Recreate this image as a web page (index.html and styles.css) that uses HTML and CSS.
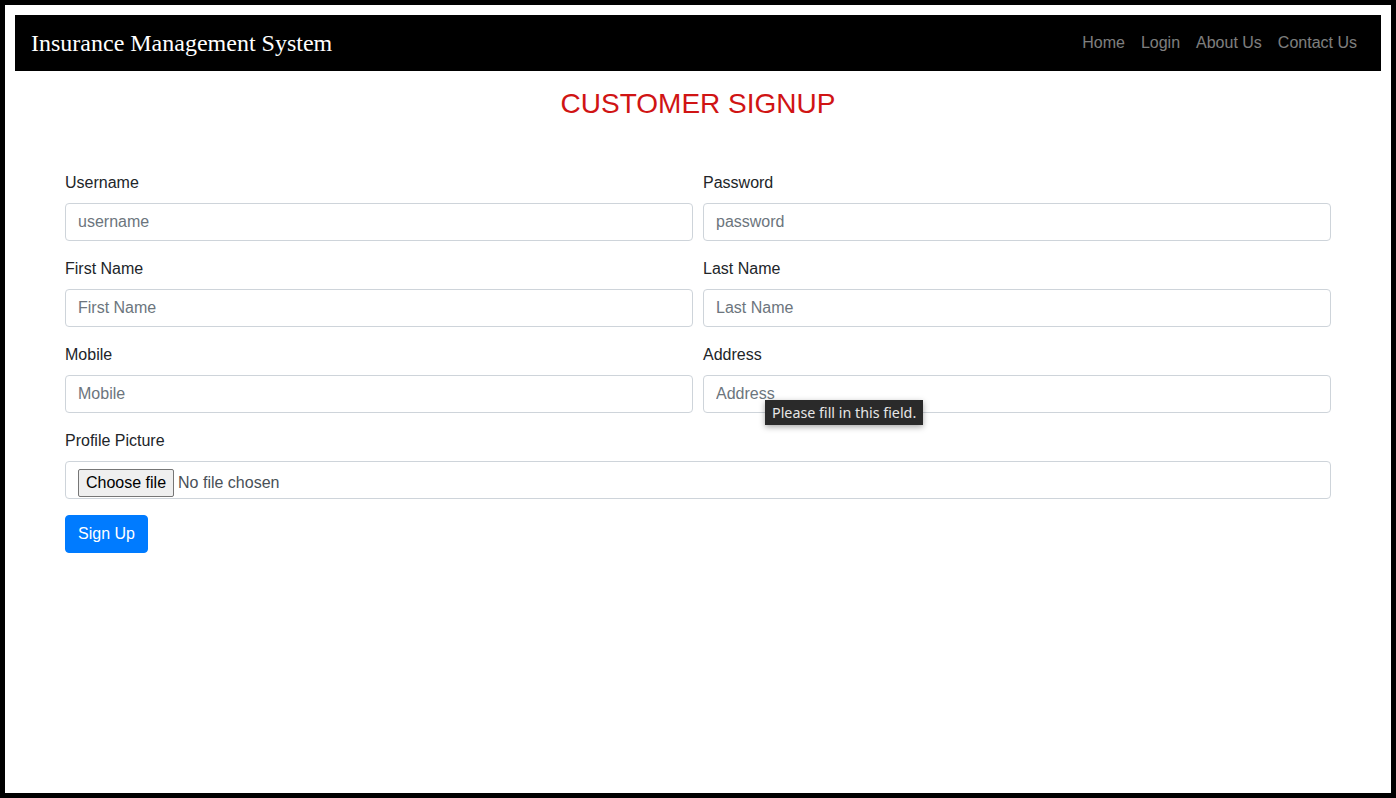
FILE: index.html
```html
<!DOCTYPE html>
<html lang="en">
<head>
<meta charset="utf-8">
<title>Customer Signup</title>
<link rel="stylesheet" href="styles.css">
</head>
<body>
<div class="frame">
  <nav class="navbar">
    <a class="brand" href="#">Insurance Management System</a>
    <ul class="nav-links">
      <li><a href="#">Home</a></li>
      <li><a href="#">Login</a></li>
      <li><a href="#">About Us</a></li>
      <li><a href="#">Contact Us</a></li>
    </ul>
  </nav>

  <h2 class="title">CUSTOMER SIGNUP</h2>

  <form class="signup-form">
    <div class="form-row">
      <div class="form-group">
        <label>Username</label>
        <input class="form-control" type="text" placeholder="username">
      </div>
      <div class="form-group">
        <label>Password</label>
        <input class="form-control" type="password" placeholder="password">
      </div>
    </div>
    <div class="form-row">
      <div class="form-group">
        <label>First Name</label>
        <input class="form-control" type="text" placeholder="First Name">
      </div>
      <div class="form-group">
        <label>Last Name</label>
        <input class="form-control" type="text" placeholder="Last Name">
      </div>
    </div>
    <div class="form-row">
      <div class="form-group">
        <label>Mobile</label>
        <input class="form-control" type="text" placeholder="Mobile">
      </div>
      <div class="form-group">
        <label>Address</label>
        <div class="field-wrap">
          <input class="form-control" type="text" placeholder="Address">
          <div class="tooltip">Please fill in this field.</div>
        </div>
      </div>
    </div>
    <div class="form-group">
      <label>Profile Picture</label>
      <label class="file-field">
        <input class="file-hidden" type="file">
        <span class="file-btn">Choose file</span>
        <span class="file-name">No file chosen</span>
      </label>
    </div>
    <button class="btn-primary" type="button">Sign Up</button>
  </form>
</div>
</body>
</html>
```

FILE: styles.css
```css
* { box-sizing: border-box; }

html, body {
  margin: 0;
  padding: 0;
  background: #fff;
}

body {
  font-family: "Liberation Sans", Arial, sans-serif;
  font-size: 16px;
  line-height: 24px;
  color: #212529;
}

.frame {
  width: 1396px;
  height: 798px;
  border: 5px solid #000;
  padding: 10px;
}

.navbar {
  height: 56px;
  background: #000;
  display: flex;
  align-items: center;
  justify-content: space-between;
  padding: 8px 16px;
}

.brand {
  font-family: "Liberation Serif", "Times New Roman", serif;
  font-size: 24px;
  line-height: 30px;
  color: #fff;
  text-decoration: none;
}

.nav-links {
  list-style: none;
  display: flex;
  margin: 0;
  padding: 0;
}

.nav-links a {
  display: block;
  padding: 8px 8px;
  color: rgba(255, 255, 255, 0.5);
  text-decoration: none;
  font-size: 16px;
  line-height: 24px;
}

.title {
  margin: 16px 0 0;
  text-align: center;
  font-size: 28px;
  line-height: 34px;
  font-weight: 400;
  color: #d01414;
}

.signup-form {
  padding: 50px 50px 0;
}

.form-row {
  display: grid;
  grid-template-columns: 1fr 1fr;
  column-gap: 10px;
}

.form-group {
  margin-bottom: 16px;
}

.form-group > label {
  display: block;
  margin-bottom: 8px;
}

.form-control {
  display: block;
  width: 100%;
  height: 38px;
  padding: 6px 12px;
  font-family: "Liberation Sans", Arial, sans-serif;
  font-size: 16px;
  line-height: 24px;
  color: #495057;
  background: #fff;
  border: 1px solid #ced4da;
  border-radius: 4px;
  outline: none;
}

.form-control::placeholder {
  color: #6c757d;
  opacity: 1;
}

.field-wrap {
  position: relative;
}

.tooltip {
  position: absolute;
  left: 62px;
  top: 25px;
  height: 25px;
  padding: 0 7px;
  background: #2a2a2a;
  color: #e6e6e6;
  font-family: "Noto Sans", "Open Sans", sans-serif;
  font-size: 14.3px;
  line-height: 25px;
  white-space: nowrap;
  box-shadow: 0 2px 6px rgba(0, 0, 0, 0.35);
  z-index: 5;
}

.form-group > .file-field {
  display: flex;
  align-items: flex-start;
  height: 38px;
  margin: 0;
  padding: 7px 12px 0;
  border: 1px solid #ced4da;
  border-radius: 4px;
  cursor: pointer;
}

.file-hidden {
  display: none;
}

.file-btn {
  display: block;
  height: 28px;
  padding: 0 7px;
  margin-right: 4px;
  line-height: 26px;
  color: #000;
  background: #efefef;
  border: 1px solid #767676;
  border-radius: 2px;
}

.file-name {
  line-height: 27px;
  color: #495057;
}

.btn-primary {
  display: inline-block;
  height: 38px;
  padding: 6px 12px;
  font-family: "Liberation Sans", Arial, sans-serif;
  font-size: 16px;
  line-height: 24px;
  color: #fff;
  background: #007bff;
  border: 1px solid #007bff;
  border-radius: 4px;
}
```
